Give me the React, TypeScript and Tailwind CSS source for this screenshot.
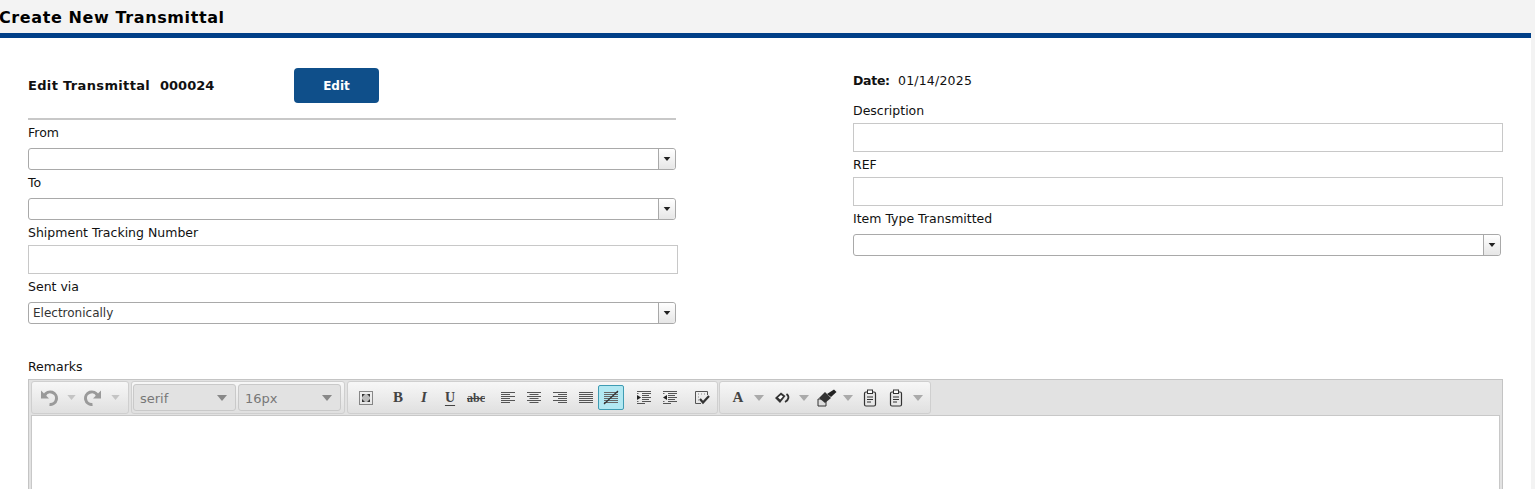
import React from "react";

const Caret = ({ c = "#aaa", w = 10, h = 6 }: { c?: string; w?: number; h?: number }) => (
  <svg width={w} height={h} viewBox="0 0 10 6" className="block"><path d="M0 0H10L5 6Z" fill={c} /></svg>
);

const Label = ({ children, cls = "mb-[4px]" }: { children: React.ReactNode; cls?: string }) => (
  <div className={`h-[24px] pt-[2px] flex items-center text-[12.5px] text-[#111] ${cls}`}>{children}</div>
);

const Combo = ({ value = "", cls = "w-[648px]" }: { value?: string; cls?: string }) => (
  <div className={`h-[22px] flex border border-[#a9a9a9] rounded-[3px] bg-white ${cls}`}>
    <div className="flex-1 pl-[4px] text-[12px] leading-[20px] text-[#333]">{value}</div>
    <div className="w-[17px] border-l border-[#a9a9a9] flex items-center justify-center bg-gradient-to-b from-[#ffffff] to-[#e6e6e6] rounded-r-[3px]">
      <Caret c="#222" w={8} h={4} />
    </div>
  </div>
);

const TextBox = ({ h = "h-[29px]" }: { h?: string }) => (
  <div className={`${h} w-[650px] border border-[#c8c8c8] bg-white`} />
);

const Slot = ({ children, cls = "w-[26px]" }: { children: React.ReactNode; cls?: string }) => (
  <div className={`h-[25px] flex items-center justify-center shrink-0 ${cls}`}>{children}</div>
);

const Group = ({ children, cls }: { children: React.ReactNode; cls: string }) => (
  <div className={`h-[33px] flex items-center shrink-0 rounded-[3px] border border-[#cfcfcf] bg-gradient-to-b from-[#f7f7f7] to-[#e0e0e0] ${cls}`}>
    {children}
  </div>
);

const Lines = ({ rows }: { rows: [number, number][] }) => (
  <svg width="16" height="15" viewBox="0 0 16 15" className="block">
    {rows.map(([x, w], i) => (
      <rect key={i} x={x} y={2 + i * 2} width={w} height="1" fill="#555" />
    ))}
  </svg>
);

const Undo = ({ flip = false }: { flip?: boolean }) => (
  <svg width="18" height="17" viewBox="0 0 18 17" className="block" style={flip ? { transform: "scaleX(-1)" } : undefined}>
    <path d="M4.5 6.5A6.3 6.3 0 1 1 9.5 15.5" fill="none" stroke="#9a9a9a" strokeWidth="3" />
    <path d="M1 1.5V9.5H9Z" fill="#9a9a9a" />
  </svg>
);

const Sel = ({ text, cls }: { text: string; cls: string }) => (
  <div className={`h-[27px] flex items-center justify-between pl-[6px] pr-[8px] shrink-0 rounded-[3px] border border-[#c9c9c9] bg-[#e2e2e2] text-[13px] text-[#777] ${cls}`}>
    <span className="pt-[2px]">{text}</span>
    <Caret c="#888" w={10} h={6} />
  </div>
);

const Clip = () => (
  <svg width="14" height="18" viewBox="0 0 14 18" className="block">
    <rect x="1.5" y="3" width="11" height="14" rx="1.5" fill="#e8e8e8" stroke="#333" strokeWidth="1.2" />
    <rect x="4.5" y="1" width="5" height="3.5" fill="#fff" stroke="#333" />
    <path d="M4 8H10M4 10.5H10M4 13H8" stroke="#333" />
  </svg>
);

const Indent = ({ out = false }: { out?: boolean }) => (
  <svg width="16" height="15" viewBox="0 0 16 15" className="block">
    <path d="M1 1.5H2.5M1 3.5H2.5M1 11.5H2.5M1 13.5H2.5" stroke="#666" />
    <path d="M1 1.5H15M6 3.5H15M6 5.5H13M6 7.5H15M6 9.5H13M6 11.5H15M1 13.5H9" stroke="#555" />
    <path d={out ? "M5 5V10L1 7.5Z" : "M1 5V10L5 7.5Z"} fill="#222" />
  </svg>
);

const serif = { fontFamily: '"Liberation Serif", serif' };

export default function App() {
  return (
    <div className="h-[489px] overflow-hidden bg-[#f3f3f3] flex flex-col" style={{ fontFamily: '"DejaVu Sans", Verdana, sans-serif' }}>
      <div className="h-[33px] shrink-0 flex items-center text-[16px] tracking-[0.6px] font-bold text-black leading-none pt-[2px] -ml-[1px]">
        Create New Transmittal
      </div>
      <div className="h-[5px] w-[1531px] shrink-0 bg-[#003f87]" />
      <div className="w-[1531px] flex-1 bg-white pl-[28px]">
        <div className="flex">
          <div className="w-[650px] pt-[30px]">
            <div className="h-[35px] flex items-center">
              <div className="w-[266px] flex text-[13px] font-bold text-[#111]">
                <span className="w-[132px] tracking-[0.34px]">Edit Transmittal</span>
                <span>000024</span>
              </div>
              <div className="w-[85px] h-[35px] rounded-[4px] bg-[#0f4f8a] text-white text-[12px] font-bold flex items-center justify-center">Edit</div>
            </div>
            <div className="mt-[15px] h-[2px] w-[648px] bg-[#c8c8c8]" />
            <Label cls="mb-[4px]">From</Label>
            <Combo />
            <Label cls="mb-[4px]">To</Label>
            <Combo />
            <Label cls="mb-[1px]">Shipment Tracking Number</Label>
            <TextBox />
            <Label cls="mb-[4px]">Sent via</Label>
            <Combo value="Electronically" />
          </div>
          <div className="ml-[175px] w-[650px] pt-[30px]">
            <div className="h-[25px] pt-[2px] flex items-center text-[12.5px] text-[#111]">
              <span className="font-bold w-[45px] tracking-[-0.3px]">Date:</span>
              <span className="tracking-[0.2px]">01/14/2025</span>
            </div>
            <Label cls="mb-[1px] mt-[5px]">Description</Label>
            <TextBox />
            <Label cls="mb-[1px]">REF</Label>
            <TextBox />
            <Label cls="mb-[4px]">Item Type Transmitted</Label>
            <Combo />
          </div>
        </div>

        <div className="mt-[30px]">
          <Label cls="mb-[1px]">Remarks</Label>
          <div className="w-[1475px] border border-[#c4c4c4] bg-[#e2e2e2] h-[140px] flex flex-col">
            <div className="h-[35px] shrink-0 flex items-center gap-[2px] pl-[2px]">
              <Group cls="w-[98px]">
                <Slot cls="w-[24px] ml-[5px]"><Undo /></Slot>
                <Slot cls="w-[20px]"><Caret c="#c4c4c4" w={9} h={5} /></Slot>
                <Slot cls="w-[24px]"><Undo flip /></Slot>
                <Slot cls="w-[20px]"><Caret c="#c4c4c4" w={9} h={5} /></Slot>
              </Group>
              <div className="flex items-center gap-[2px] pl-[1px] h-[33px] w-[214px] shrink-0 rounded-[3px] border border-[#cfcfcf] bg-gradient-to-b from-[#f7f7f7] to-[#e0e0e0]">
                <Sel text="serif" cls="w-[103px]" />
                <Sel text="16px" cls="w-[103px]" />
              </div>
              <Group cls="w-[371px] pl-[5px]">
                <Slot>
                  <svg width="14" height="14" viewBox="0 0 14 14" className="block">
                    <rect x="0.5" y="0.5" width="13" height="13" fill="none" stroke="#222" strokeDasharray="1 1" />
                    <rect x="3" y="3" width="8" height="8" fill="#bbb" />
                    <path d="M3 3H6L3 6ZM11 3H8L11 6ZM3 11H6L3 8ZM11 11H8L11 8Z" fill="#333" />
                  </svg>
                </Slot>
                <div className="w-[6px]" />
                <Slot><span className="text-[15px] font-bold text-[#444]" style={serif}>B</span></Slot>
                <Slot><span className="text-[15px] font-bold italic text-[#444]" style={serif}>I</span></Slot>
                <Slot><span className="text-[14px] font-bold underline underline-offset-[3px] decoration-1 text-[#444]" style={serif}>U</span></Slot>
                <Slot><span className="text-[12px] font-bold line-through decoration-1 text-[#444]" style={serif}>abc</span></Slot>
                <div className="w-[6px]" />
                <Slot><Lines rows={[[1, 14], [1, 9], [1, 14], [1, 9], [1, 14], [1, 9]]} /></Slot>
                <Slot><Lines rows={[[1, 14], [3.5, 9], [1, 14], [3.5, 9], [1, 14], [3.5, 9]]} /></Slot>
                <Slot><Lines rows={[[1, 14], [6, 9], [1, 14], [6, 9], [1, 14], [6, 9]]} /></Slot>
                <Slot><Lines rows={[[1, 14], [1, 14], [1, 14], [1, 14], [1, 14], [1, 14]]} /></Slot>
                <div className="w-[26px] h-[25px] shrink-0 rounded-[2px] border border-[#3f9cb3] bg-[#b2e8f2] flex items-center justify-center -ml-[1px]">
                  <svg width="16" height="15" viewBox="0 0 16 15" className="block">
                    <path d="M1 2.5H15M1 4.5H15M1 6.5H15M1 8.5H15M1 10.5H15M1 12.5H15" stroke="#666" />
                    <path d="M1 14L15 1" stroke="#333" strokeWidth="1.2" />
                  </svg>
                </div>
                <div className="w-[7px]" />
                <Slot><Indent /></Slot>
                <Slot><Indent out /></Slot>
                <div className="w-[6px]" />
                <Slot>
                  <svg width="16" height="15" viewBox="0 0 16 15" className="block">
                    <path d="M1.5 13.5V1.5H13.5V5M1.5 13.5H7" fill="none" stroke="#555" />
                    <path d="M4 4h1M7 4h1M10 4h1M4 7h1M4 10h1" stroke="#888" />
                    <path d="M6 9L9 12.5L15 6" fill="none" stroke="#333" strokeWidth="2.2" />
                  </svg>
                </Slot>
              </Group>
              <Group cls="w-[212px] pl-[7px] -ml-[1px]">
                <Slot cls="w-[22px]"><span className="text-[15px] font-bold text-[#444]" style={serif}>A</span></Slot>
                <Slot cls="w-[20px]"><Caret c="#aaa" w={10} h={6} /></Slot>
                <Slot cls="w-[26px]">
                  <svg width="16" height="13" viewBox="0 0 16 13" className="block">
                    <path d="M1 7L7 1.5L11.5 5L6 12Z" fill="#333" />
                    <path d="M4 6.5L7 4L9 5.5L6.2 8.5Z" fill="#fff" />
                    <path d="M12.5 3C15.5 5 15 9 11 11" fill="none" stroke="#333" strokeWidth="1.8" />
                  </svg>
                </Slot>
                <Slot cls="w-[17px]"><Caret c="#aaa" w={10} h={6} /></Slot>
                <Slot cls="w-[30px]">
                  <svg width="20" height="18" viewBox="0 0 20 18" className="block">
                    <path d="M1 10H9V17H1Z" fill="#ddd" stroke="#333" />
                    <path d="M2 9L8 3L14 9L8 14Z" fill="#333" />
                    <path d="M10 5L17 0.5L19.5 3L14 8Z" fill="#222" />
                  </svg>
                </Slot>
                <Slot cls="w-[12px]"><Caret c="#aaa" w={10} h={6} /></Slot>
                <Slot cls="w-[32px]"><Clip /></Slot>
                <Slot cls="w-[20px]"><Clip /></Slot>
                <Slot cls="w-[24px]"><Caret c="#aaa" w={10} h={6} /></Slot>
              </Group>
            </div>
            <div className="flex-1 mx-[2px] border border-[#c8c8c8] bg-white" />
          </div>
        </div>
      </div>
    </div>
  );
}
